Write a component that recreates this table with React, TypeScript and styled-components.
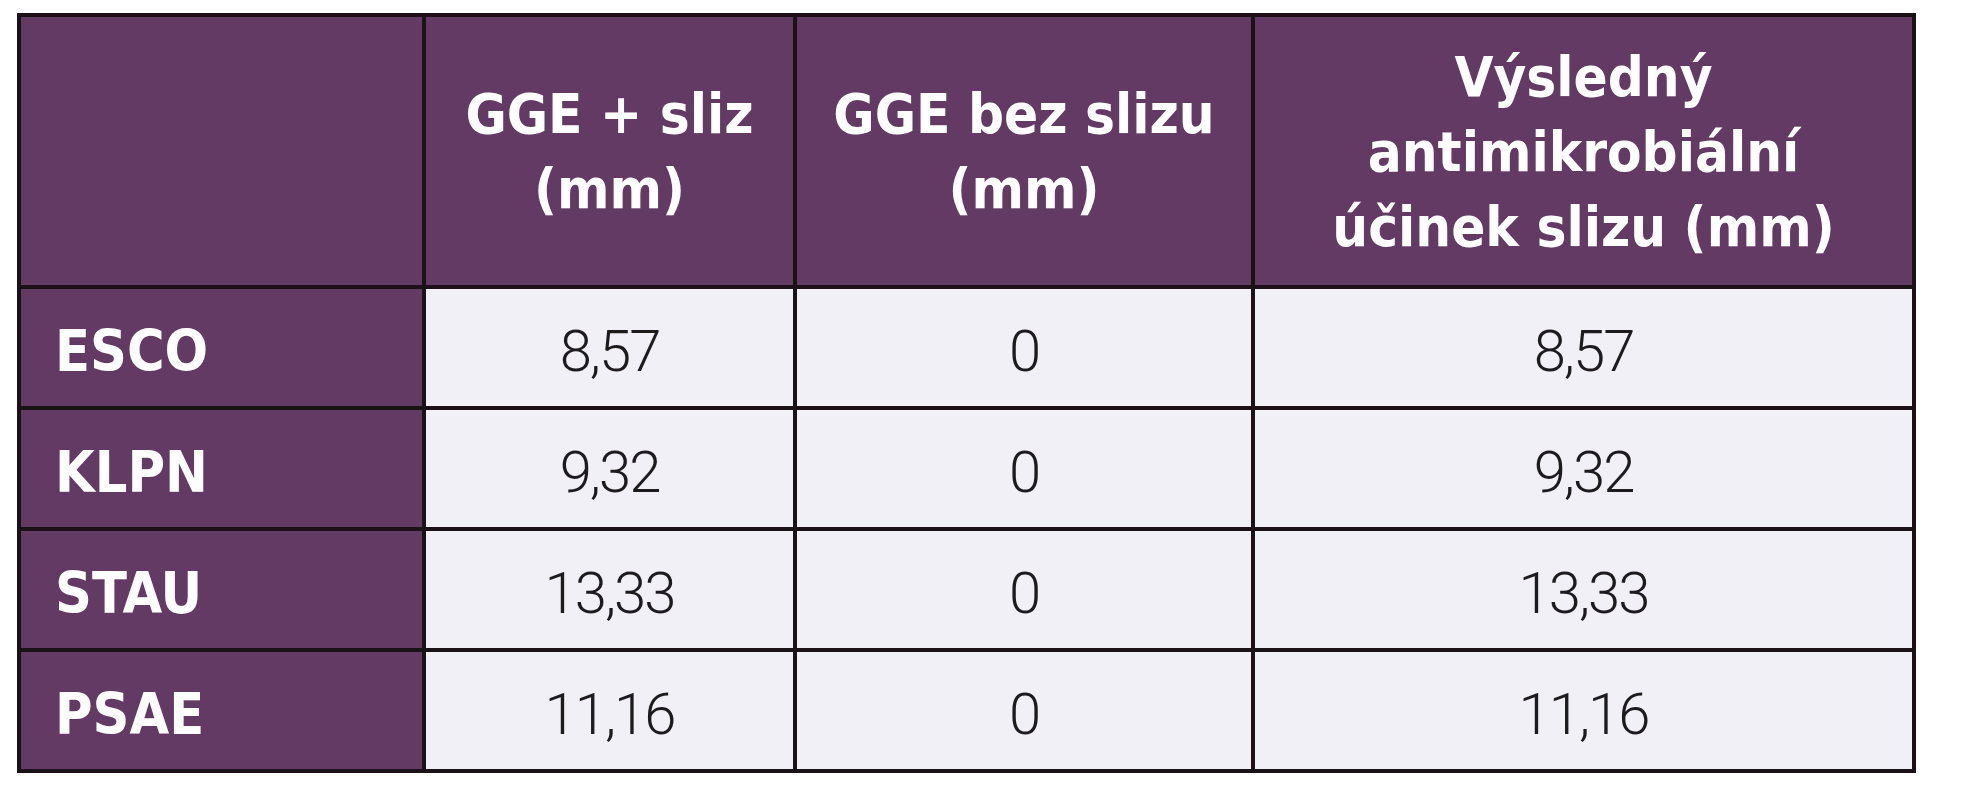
import { createGlobalStyle } from "styled-components"
import styled from "styled-components"

const GlobalStyle = createGlobalStyle`
  html, body {
    margin: 0;
    padding: 0;
    background: #ffffff;
  }
`

const Page = styled.div`
  padding: 13px 0 0 17px;
  width: 1967px;
  height: 800px;
  box-sizing: border-box;
`

const Table = styled.table`
  border-collapse: collapse;
  table-layout: fixed;
  width: 1897px;
  border: 4px solid #1a1216;
`

const HeadCell = styled.th`
  background: #623a63;
  color: #ffffff;
  height: 268px;
  padding: 0 24px;
  border: 4px solid #1a1216;
  font-family: "DejaVu Sans", "Liberation Sans", sans-serif;
  font-stretch: condensed;
  font-weight: 700;
  font-size: 56px;
  line-height: 75px;
  text-align: center;
  vertical-align: middle;
`

const LabelCell = styled.th`
  background: #623a63;
  color: #ffffff;
  height: 111px;
  padding: 6px 0 0 34px;
  border: 4px solid #1a1216;
  font-family: "DejaVu Sans", "Liberation Sans", sans-serif;
  font-stretch: condensed;
  font-weight: 700;
  font-size: 57px;
  line-height: 66px;
  text-align: left;
  vertical-align: middle;
`

const ValueCell = styled.td`
  background: #f1f0f7;
  color: #1e1b1e;
  height: 111px;
  padding: 6px 0 0;
  border: 4px solid #1a1216;
  font-family: Roboto, "Liberation Sans", sans-serif;
  font-weight: 300;
  font-size: 58px;
  line-height: 66px;
  letter-spacing: -2px;
  text-align: center;
  vertical-align: middle;
`

const Line = styled.span`
  display: block;
  white-space: nowrap;
`

const columns = [405, 371, 458, 661]

const headers: string[][] = [
  [],
  ["GGE + sliz", "(mm)"],
  ["GGE bez slizu", "(mm)"],
  ["Výsledný", "antimikrobiální", "účinek slizu (mm)"],
]

const rows = [
  { label: "ESCO", values: ["8,57", "0", "8,57"] },
  { label: "KLPN", values: ["9,32", "0", "9,32"] },
  { label: "STAU", values: ["13,33", "0", "13,33"] },
  { label: "PSAE", values: ["11,16", "0", "11,16"] },
]

export default function App() {
  return (
    <>
      <GlobalStyle />
      <Page>
        <Table>
          <colgroup>
            {columns.map((w, i) => (
              <col key={i} style={{ width: w }} />
            ))}
          </colgroup>
          <thead>
            <tr>
              {headers.map((lines, i) => (
                <HeadCell key={i}>
                  {lines.map((line) => (
                    <Line key={line}>{line}</Line>
                  ))}
                </HeadCell>
              ))}
            </tr>
          </thead>
          <tbody>
            {rows.map((row) => (
              <tr key={row.label}>
                <LabelCell>{row.label}</LabelCell>
                {row.values.map((v, i) => (
                  <ValueCell key={i}>{v}</ValueCell>
                ))}
              </tr>
            ))}
          </tbody>
        </Table>
      </Page>
    </>
  )
}
